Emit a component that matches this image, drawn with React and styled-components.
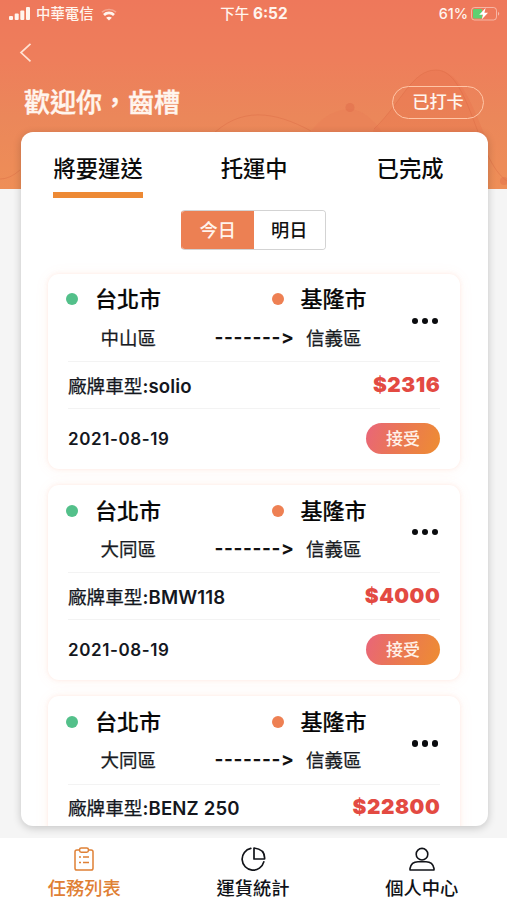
import React from "react";
import styled, { createGlobalStyle } from "styled-components";

const GlobalStyle = createGlobalStyle`
  *, *::before, *::after { box-sizing: border-box; }
  body {
    margin: 0;
    background: #f5f5f5;
    font-family: Inter, "Noto Sans CJK TC", sans-serif;
    color: #0c0d10;
  }
  button { font: inherit; color: inherit; background: none; border: 0; padding: 0; }
`;

const Screen = styled.div`
  width: 507px;
  height: 900px;
  display: flex;
  flex-direction: column;
  overflow: hidden;
  background: #f5f5f5;
`;

const Header = styled.header`
  position: relative;
  flex: none;
  height: 188.5px;
  margin-bottom: -56.5px;
  background: linear-gradient(180deg, #ee785b 0%, #ee7e5b 32%, #eb875a 62%, #ee8e57 100%);
  color: #fff5ee;
`;

const Waves = styled.svg`
  position: absolute;
  inset: 0;
`;

const StatusBar = styled.div`
  position: relative;
  display: grid;
  grid-template-columns: 1fr auto 1fr;
  align-items: center;
  height: 28px;
  padding: 0 7px 0 9px;
  font-size: 14.4px;
  font-weight: 500;
  line-height: 20px;
`;

const StatusGroup = styled.div`
  display: flex;
  align-items: center;
  justify-content: ${(p) => (p.$end ? "flex-end" : "flex-start")};
  gap: ${(p) => (p.$end ? "3px" : "5px")};
  svg:last-child { margin-left: ${(p) => (p.$end ? "0" : "2px")}; }
`;

const Clock = styled.div`
  font-size: 14.4px;
  margin-right: 1px;
  b { font-weight: 700; font-size: 15.4px; }
`;

const BackButton = styled.button`
  position: relative;
  display: flex;
  margin: 15px 0 0 19px;
  width: 14px;
  height: 20px;
`;

const Welcome = styled.div`
  position: relative;
  display: flex;
  align-items: center;
  justify-content: space-between;
  height: 34px;
  margin: 22px 23px 0 24px;
`;

const Title = styled.h1`
  margin: 0;
  padding-top: 1px;
  font-size: 26px;
  line-height: 34px;
  font-weight: 500;
  -webkit-text-stroke: 0.4px currentColor;
`;

const Badge = styled.button`
  width: 92px;
  height: 33px;
  border: 1.5px solid #ffc5a6;
  border-radius: 17px;
  font-size: 17.2px;
  line-height: 30px;
  font-weight: 500;
  color: #fff5ee;
`;

const Sheet = styled.main`
  position: relative;
  flex: none;
  height: 693.5px;
  margin: 0 19.5px 0 20.5px;
  padding: 0 27.5px;
  border-radius: 12px;
  background: #fff;
  box-shadow: 0 2px 9px rgba(0, 0, 0, 0.2);
  overflow: hidden;
`;

const Tabs = styled.div`
  display: flex;
  justify-content: space-between;
  padding: 19px 16px 0 5px;
`;

const Tab = styled.button`
  height: 47px;
  padding: 1px 0.5px 0;
  margin-left: ${(p) => (p.$center ? "-11px" : "0")};
  display: flex;
  font-size: 22.3px;
  line-height: 34px;
  font-weight: 500;
  color: #0b0b0b;
  border-bottom: 6px solid ${(p) => (p.$active ? "#ed8934" : "transparent")};
`;

const DayToggle = styled.div`
  display: flex;
  width: 145px;
  height: 40px;
  margin: 12px 0 23.5px 133px;
  border: 1px solid #d3d3d3;
  border-color: #d3d3d3 #d3d3d3 #d3d3d3 #ec8053;
  border-radius: 4px;
  overflow: hidden;
`;

const Day = styled.button`
  flex: 1;
  font-size: 18.2px;
  line-height: 37px;
  font-weight: 500;
  color: ${(p) => (p.$active ? "#fff4ec" : "#111")};
  background: ${(p) => (p.$active ? "#ec8053" : "#fff")};
`;

const CardList = styled.div`
  display: flex;
  flex-direction: column;
  gap: 15.8px;
`;

const Card = styled.article`
  flex: none;
  height: 195.5px;
  padding: 0 20px;
  border-radius: 11px;
  background: #fff;
  box-shadow: 0 0 4px rgba(248, 142, 105, 0.17), 0 1px 15px rgba(248, 142, 105, 0.07);
`;

const Route = styled.div`
  display: flex;
  align-items: center;
  height: 88.5px;
  border-bottom: 1px solid #f3f3f3;
`;

const RouteGrid = styled.div`
  flex: 1;
  display: grid;
  grid-template-columns: 148.5px 57.5px 1fr;
  grid-template-rows: 38px 39px;
  align-items: center;
  padding-top: 7px;
  height: 88px;
  align-content: start;
  margin-left: -2px;
`;

const City = styled.div`
  display: flex;
  align-items: center;
  gap: 17px;
  grid-column: ${(p) => (p.$to ? "2 / 4" : "1")};
  padding-left: ${(p) => (p.$to ? "57px" : "0")};
  font-size: 22px;
  line-height: 32px;
  font-weight: 500;
  color: #070707;
  -webkit-text-stroke: 0.2px currentColor;
`;

const Dot = styled.span`
  width: 12px;
  height: 12px;
  border-radius: 50%;
  background: ${(p) => p.$color};
`;

const District = styled.div`
  padding-left: ${(p) => (p.$to ? "0" : "34.5px")};
  margin-left: ${(p) => (p.$to ? "34px" : "0")};
  font-size: 18.5px;
  line-height: 28px;
  font-weight: 400;
  color: #181b22;
  -webkit-text-stroke: 0.25px currentColor;
`;

const Arrow = styled.div`
  font-size: 19px;
  line-height: 28px;
  font-weight: 700;
  letter-spacing: 0.6px;
  white-space: nowrap;
  color: #111;
`;

const More = styled.button`
  display: flex;
  gap: 3.3px;
  margin: 7px 2px 0 0;
  span { width: 6.5px; height: 6.5px; border-radius: 50%; background: #0a0b0e; }
`;

const ModelRow = styled.div`
  display: flex;
  align-items: center;
  justify-content: space-between;
  height: 46.5px;
  padding-bottom: 1px;
  border-bottom: 1px solid #f3f3f3;
  font-size: 18.6px;
  font-weight: 600;
  letter-spacing: 0.15px;
  color: #14171e;
`;

const Label = styled.span`
  font-weight: 400;
  letter-spacing: 0;
  -webkit-text-stroke: 0.25px currentColor;
`;

const Price = styled.strong`
  font-size: 20.8px;
  font-weight: 900;
  letter-spacing: 0.55px;
  margin-right: -0.3px;
  color: #e34a42;
`;

const DateRow = styled.div`
  display: flex;
  align-items: center;
  justify-content: space-between;
  height: 60px;
  font-size: 17px;
  font-weight: 600;
  letter-spacing: 0.6px;
  color: #14171e;
`;

const Accept = styled.button`
  width: 74px;
  height: 31px;
  border-radius: 16px;
  background: linear-gradient(110deg, #e9657a 0%, #ea7656 42%, #ee8d31 100%);
  color: #fff1e8;
  font-size: 17px;
  line-height: 30px;
  font-weight: 500;
  letter-spacing: 0;
`;

const Nav = styled.nav`
  flex: none;
  display: grid;
  grid-template-columns: repeat(3, 168.7px);
  height: 62px;
  margin-top: 12.5px;
  background: #fff;
`;

const NavItem = styled.button`
  display: flex;
  flex-direction: column;
  align-items: center;
  padding-top: 9px;
  gap: 3px;
  font-size: 18.3px;
  line-height: 26px;
  font-weight: 500;
  color: ${(p) => (p.$active ? "#df8035" : "#111318")};
`;

const SignalIcon = () => (
  <svg width="22" height="14" viewBox="0 0 22 14" fill="#fff5ee">
    <rect x="0" y="9" width="4" height="4" rx="1" />
    <rect x="5.7" y="6.5" width="4" height="6.5" rx="1" />
    <rect x="11.3" y="3.5" width="4" height="9.5" rx="1" />
    <rect x="17" y="0" width="4" height="13" rx="1" />
  </svg>
);

const WifiIcon = () => (
  <svg width="16" height="13" viewBox="0 0 16 13" fill="none" stroke="#fff5ee">
    <path d="M1 4.2A10.5 10.5 0 0 1 15 4.2" strokeWidth="1.6" opacity=".35" />
    <path d="M3 7A7 7 0 0 1 13 7" strokeWidth="2.6" />
    <path d="M8 12.6L5.1 9.7Q8 7.8 10.9 9.7Z" fill="#fff5ee" stroke="none" />
  </svg>
);

const BatteryIcon = () => (
  <svg width="29" height="14" viewBox="0 0 29 14">
    <rect x=".5" y=".5" width="25" height="12.5" rx="3" fill="none" stroke="#fff" opacity=".45" />
    <path d="M27 4.8Q29.5 6.8 27 8.8Z" fill="#fff" opacity=".5" />
    <rect x="2" y="2" width="9" height="9.5" rx="1" fill="#5ed071" />
    <path d="M14.6 1L8.2 7.7H12L10.7 12.5L17 5.8H13.4Z" fill="#fff" />
  </svg>
);

const TaskIcon = () => (
  <svg width="22" height="25" viewBox="0 0 22 25" fill="none" stroke="currentColor" strokeWidth="1.5">
    <path d="M6 3H3.8Q2 3 2 4.8V21.2Q2 23 3.8 23H18.2Q20 23 20 21.2V4.8Q20 3 18.2 3H16" />
    <rect x="6.6" y="1" width="8.8" height="4.2" rx="1.6" />
    <path d="M6 10H8M10 10H16M6 15.5H8M10 15.5H16" />
  </svg>
);

const ChartIcon = () => (
  <svg width="26" height="25" viewBox="0 0 26 25" fill="none" stroke="currentColor" strokeWidth="1.7">
    <path d="M10.8 1.4A11 11 0 1 0 23.8 14.9" strokeLinecap="round" />
    <path d="M14 1V12H24.6Q25.2 2.2 14 1Z" strokeLinejoin="round" />
  </svg>
);

const PersonIcon = () => (
  <svg width="28" height="25" viewBox="0 0 28 25" fill="none" stroke="currentColor" strokeWidth="1.6">
    <circle cx="14" cy="7.2" r="5.8" />
    <path d="M2 23V21.5Q3.2 14.8 10 14.8H18Q24.8 14.8 26 21.5V23Z" strokeLinejoin="round" />
  </svg>
);

const HeaderWaves = () => (
  <Waves width="507" height="188" viewBox="0 0 507 188" fill="none">
    <path d="M310 132Q328 109 351 109Q369 112 382 132Z" fill="#e57450" opacity=".2" />
    <path d="M374 129C402 102 412 70 436 70C462 70 474 111 487 140H370Z" fill="#e86b47" opacity=".25" />
    <path d="M0 179Q10 179 20 170M210 137C240 106 274 111 311 131M374 129C402 102 412 70 436 70C470 70 476 160 507 181" stroke="#d96a43" strokeWidth="1" opacity=".4" />
    <circle cx="350" cy="107.5" r="4.5" fill="#df6c49" opacity=".5" />
    <circle cx="504" cy="181" r="4" fill="#df6c49" opacity=".4" />
  </Waves>
);

const orders = [
  { from: "中山區", to: "信義區", model: "solio", price: "$2316", date: "2021-08-19" },
  { from: "大同區", to: "信義區", model: "BMW118", price: "$4000", date: "2021-08-19" },
  { from: "大同區", to: "信義區", model: "BENZ 250", price: "$22800" },
];

const OrderCard = ({ order }) => (
  <Card>
    <Route>
      <RouteGrid>
        <City><Dot $color="#53c08a" />台北市</City>
        <City $to><Dot $color="#ee8053" />基隆市</City>
        <District>{order.from}</District>
        <Arrow>-------&gt;</Arrow>
        <District $to>{order.to}</District>
      </RouteGrid>
      <More aria-label="更多"><span /><span /><span /></More>
    </Route>
    <ModelRow>
      <div><Label>廠牌車型</Label>:{order.model}</div>
      <Price>{order.price}</Price>
    </ModelRow>
    {order.date && (
      <DateRow>
        {order.date}
        <Accept>接受</Accept>
      </DateRow>
    )}
  </Card>
);

export default function App() {
  return (
    <>
      <GlobalStyle />
      <Screen>
        <Header>
          <HeaderWaves />
          <StatusBar>
            <StatusGroup><SignalIcon />中華電信<WifiIcon /></StatusGroup>
            <Clock>下午 <b>6:52</b></Clock>
            <StatusGroup $end>61% <BatteryIcon /></StatusGroup>
          </StatusBar>
          <BackButton aria-label="返回">
            <svg width="14" height="20" viewBox="0 0 14 20" fill="none" stroke="#ffe2d3" strokeWidth="1.7">
              <path d="M11.5 .8L2 9.5L11.5 18.3" />
            </svg>
          </BackButton>
          <Welcome>
            <Title>歡迎你，齒槽</Title>
            <Badge>已打卡</Badge>
          </Welcome>
        </Header>
        <Sheet>
          <Tabs>
            <Tab $active>將要運送</Tab>
            <Tab $center>托運中</Tab>
            <Tab>已完成</Tab>
          </Tabs>
          <DayToggle>
            <Day $active>今日</Day>
            <Day>明日</Day>
          </DayToggle>
          <CardList>
            {orders.map((o) => <OrderCard key={o.model} order={o} />)}
          </CardList>
        </Sheet>
        <Nav>
          <NavItem $active><TaskIcon />任務列表</NavItem>
          <NavItem><ChartIcon />運貨統計</NavItem>
          <NavItem><PersonIcon />個人中心</NavItem>
        </Nav>
      </Screen>
    </>
  );
}
